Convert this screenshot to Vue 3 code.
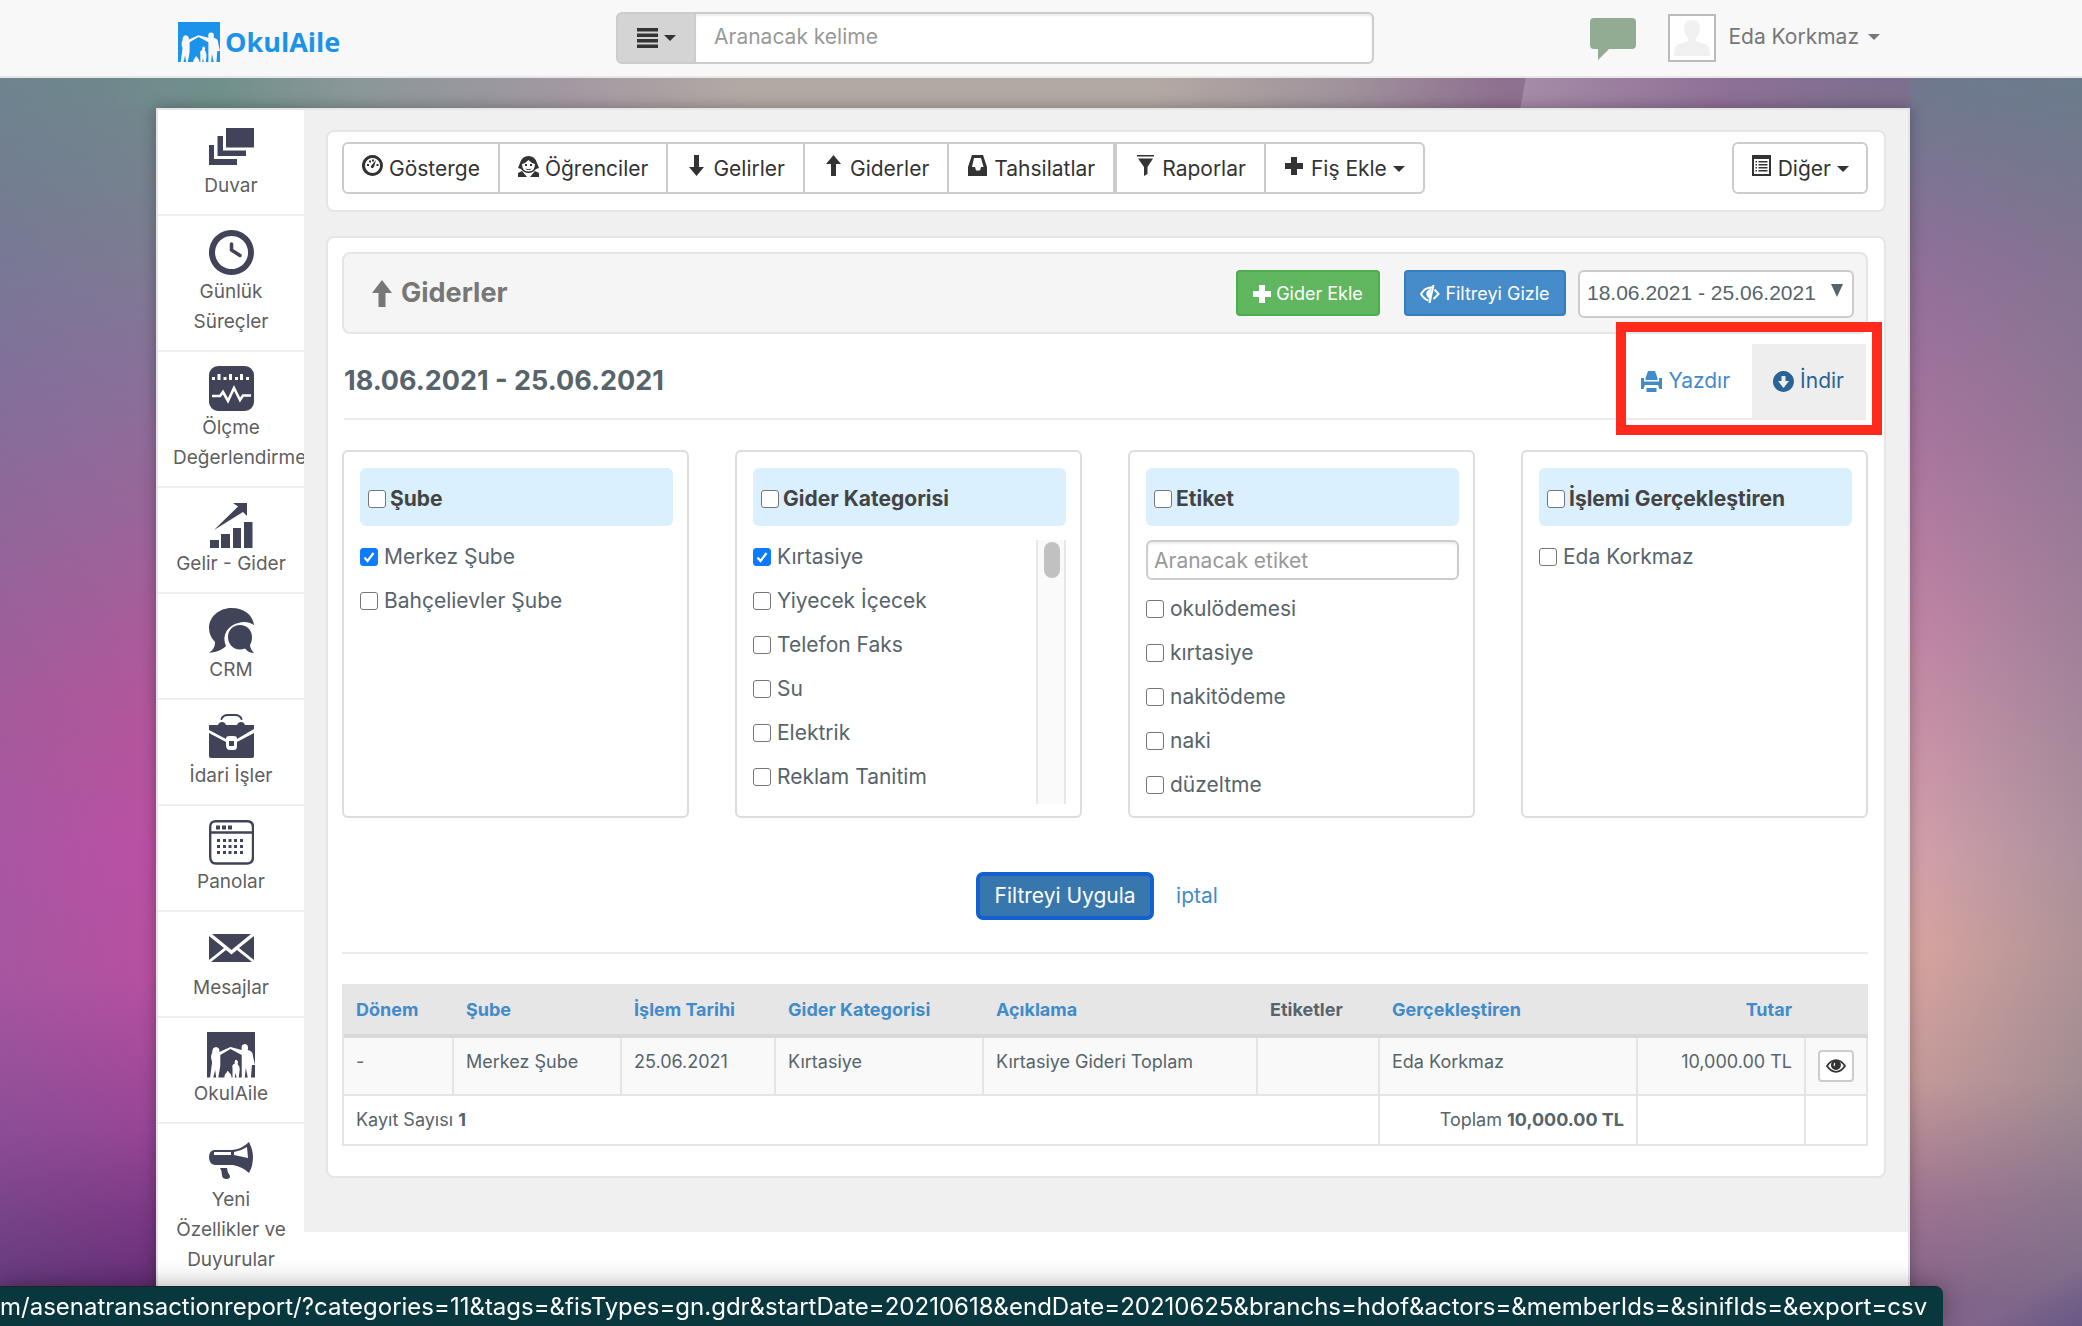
<script setup>
import { ref } from 'vue'

const familyCut =
  'M2 46 L4 30 Q2 24 4 21 Q4 15 8 15 Q12 16 11 20 L22 15 L33 18 Q32 12 36 12 Q40 12 39 18 Q44 19 44 24 L46 33 L43 33 L42 46 L39 46 L37 36 L36 46 L33 46 L33 23 L22 17 L12 23 L12 34 L10 46 L8 46 L7 38 L5 46 Z M24 46 L24 37 Q23 32 26 32 Q26 27 28 28 Q30 29 29 32 Q31 34 31 38 L30 46 L28 46 L27 41 L26 46 Z M16 46 Q16 42 18 41 Q19 37 21 41 Q23 42 23 46 Z'

const nav = [
  {
    label: 'Duvar',
    fill: 'M17 4H45V23.500H17Z M8.500 12H14V26.500H37V32H8.500Z M0 21H5V35H28V41H0Z',
  },
  {
    label: 'Günlük Süreçler',
    fill: 'M22.500 0A22.500 22.500 0 1 1 22.400 0Z M22.500 6A16.500 16.500 0 1 0 22.600 6Z',
    line: 'M22.500 14V20L31 25.500',
    lineWidth: 3.5,
  },
  {
    label: 'Ölçme Değerlendirme',
    fill: 'M9 0H36A9 9 0 0 1 45 9V36A9 9 0 0 1 36 45H9A9 9 0 0 1 0 36V9A9 9 0 0 1 9 0Z M3 11H6V14H3Z M8.500 8H11.500V14H8.500Z M14.500 11H17.500V14H14.500Z M20 8H23V14H20Z M26 11H29V14H26Z M31 8H34V14H31Z M37 11H40V14H37Z',
    cut: 'M3 30H11L14 26L19 35L25 22L31 34L34 29.500H42',
    cutWidth: 2.6,
  },
  {
    label: 'Gelir - Gider',
    fill: 'M1 38H10V46H1Z M12 32H21V46H12Z M24 26H32V46H24Z M35 20H43.500V46H35Z M5 28L29 4.500L24 1H38V14L34 10Z',
  },
  {
    label: 'CRM',
    fill: 'M22.500 0C35 0 44 7 45 17C38 12 30 14 24 17C17 21 13 29 17 38C12 43 6 44 0 45C4 42 6 39 6 34C2 30 0 25 0 20C0 9 10 0 22.500 0Z M31 17C38 17 43 22 43 29C43 33 42 35 41 37C41 40 43 43 45 45C41 45 38 43 36 40.500C26 44 19 37 19 29C19 22 24 17 31 17Z',
  },
  {
    label: 'İdari İşler',
    fill: 'M0 11H9Q10 8 13 8Q16 8 17 11H28Q29 8 32 8Q35 8 36 11H45V15L28 25Q28 22 25 22H20Q17 22 17 25L0 16Z M0 19L17 28V31Q17 36 21 36H25Q28 36 28 32V28L45 19V42Q45 44 43 44H2Q0 44 0 42Z M20 27H25V32H20Z',
    line: 'M12.500 5Q14 1 19 1H26Q31 1 32.500 5',
    lineWidth: 2,
  },
  {
    label: 'Panolar',
    fill: 'M7 5.500H11V9.500H7Z M13 5.500H17V9.500H13Z M19 5.500H23V9.500H19Z M8 19H11V22H8Z M14 19H17V22H14Z M19.500 19H22.500V22H19.500Z M25 19H28V22H25Z M31 19H34V22H31Z M8 25H11V28H8Z M14 25H17V28H14Z M19.500 25H22.500V28H19.500Z M25 25H28V28H25Z M31 25H34V28H31Z M8 31H11V34H8Z M14 31H17V34H14Z M19.500 31H22.500V34H19.500Z M25 31H28V34H25Z M31 31H34V34H31Z',
    line: 'M7 1.200H38Q44 1.200 44 7V37Q44 43.500 38 43.500H7Q1.200 43.500 1.200 37V7Q1.200 1.200 7 1.200Z M1 12.500H44',
    lineWidth: 2.4,
  },
  {
    label: 'Mesajlar',
    fill: 'M3 8H42L22.500 24Z M0 10L15 22L0 34Z M45 10V34L30 22Z M2 36L17 24L22.500 28.500L28 24L43 36Z',
  },
  {
    label: 'OkulAile',
    wide: true,
    fill: 'M-1 0H46V45.500H-1Z',
    shape: familyCut,
  },
  {
    label: 'Yeni Özellikler ve Duyurular',
    fill: 'M5 12H23Q33 11 40 4Q44 12 44 19Q44 28 40 35Q34 29 24 27H6Q0 26 0 19Q0 13 5 12Z M5 14V17H22V14Z M25 14V17L39 20L38 9Q32 13 25 14Z M11 30H18Q18 34 21 38Q21 41 18 41Q13 41 13 37Q13 33 11 30Z',
  },
]

const arrowUp = 'M10.500 0L18 9H13V21H8V9H3Z'
const plus = 'M7 2H13V8H19V14H13V20H7V14H1V8H7Z'

const groups = [
  [
    {
      label: 'Gösterge',
      fill: 'M10.500 0A10.500 10.500 0 1 1 10.400 0Z M10.500 3A7.500 7.500 0 1 0 10.600 3Z M5 9H7V11H5Z M7 5.500H9V7.500H7Z M10 4.500H12V6.500H10Z M14.500 9H16.500V11H14.500Z M9 11L14 5L12 12Q10.500 14 9 12.500Z',
    },
    {
      label: 'Öğrenciler',
      fill: 'M10.500 1Q17 1 19 8L21 13L18 14Q15 18 10.500 18Q6 18 3 14L0 13L2 8Q4 1 10.500 1Z M10.500 5Q8 8 4 9Q4 16.500 10.500 16.500Q17 16.500 17 9Q13 8 10.500 5Z M7 9H9V11H7Z M12 9H14V11H12Z M7 13Q10.500 15.500 14 13L12 15H9Z M0 22V18L4 16L9 22Z M21 22V18L17 16L12 22Z',
    },
    { label: 'Gelirler', fill: 'M8 0H13V12H18L10.500 21L3 12H8Z' },
    { label: 'Giderler', fill: arrowUp },
    {
      label: 'Tahsilatlar',
      fill: 'M5 0H16L20 12V21H1V12Z M7 3L5 12H8L9 15.500H13L14 12H16.500L14 3Z',
    },
  ],
  [
    { label: 'Raporlar', fill: 'M2 0H19V1.500H2Z M3 3.500H18L12.500 12V19L9 21V12Z' },
    { label: 'Fiş Ekle', fill: plus, caret: true },
  ],
]

const branches = ref([
  { label: 'Merkez Şube', on: true },
  { label: 'Bahçelievler Şube', on: false },
])
const categories = ref([
  { label: 'Kırtasiye', on: true },
  { label: 'Yiyecek İçecek', on: false },
  { label: 'Telefon Faks', on: false },
  { label: 'Su', on: false },
  { label: 'Elektrik', on: false },
  { label: 'Reklam Tanitim', on: false },
])
const tags = ref(
  ['okulödemesi', 'kırtasiye', 'nakitödeme', 'naki', 'düzeltme'].map((label) => ({ label, on: false })),
)
const actors = ref([{ label: 'Eda Korkmaz', on: false }])

const filters = [
  { title: 'Şube', items: branches },
  { title: 'Gider Kategorisi', items: categories, scroll: true },
  { title: 'Etiket', items: tags, search: true },
  { title: 'İşlemi Gerçekleştiren', items: actors },
]
</script>

<template>
  <div class="page">
    <header class="topbar">
      <a class="logo" href="#">
        <svg width="42" height="40" viewBox="-1 0 47 45.500" preserveAspectRatio="none" aria-hidden="true">
          <path d="M-1 0H46V45.500H-1Z" fill="#1b93ea" />
          <path :d="familyCut" fill="#f8f8f8" />
        </svg>
        <span>OkulAile</span>
      </a>
      <form class="search" @submit.prevent>
        <button type="button" class="search-menu" aria-label="Menü">
          <svg width="21" height="20" viewBox="0 0 21 20" aria-hidden="true">
            <path d="M0 0H21V3.500H0Z M0 5.500H21V9H0Z M0 11H21V14.500H0Z M0 16.500H21V20H0Z" fill="#333" />
          </svg>
          <i class="caret"></i>
        </button>
        <input type="text" placeholder="Aranacak kelime" aria-label="Aranacak kelime" />
      </form>
      <div class="user">
        <svg class="chat" width="46" height="42" viewBox="0 0 46 42" aria-hidden="true">
          <path d="M4 0H42Q46 0 46 4V27Q46 31 42 31H19L8 42V31H4Q0 31 0 27V4Q0 0 4 0Z" fill="#92ab93" />
        </svg>
        <span class="avatar">
          <svg width="36" height="36" viewBox="0 0 36 36" aria-hidden="true">
            <path d="M18 0Q26 0 26 9Q26 14 22 18V21L33 25Q36 27 36 36H0Q0 27 3 25L14 21V18Q10 14 10 9Q10 0 18 0Z" fill="#f1f1f1" />
          </svg>
        </span>
        <button type="button" class="user-name">Eda Korkmaz<i class="caret"></i></button>
      </div>
    </header>

    <div class="shell">
      <nav class="side">
        <a v-for="n in nav" :key="n.label" href="#" class="side-item">
          <svg :width="n.wide ? 48 : 45" height="46" :viewBox="n.wide ? '-1 0 47 46' : '0 0 45 46'" preserveAspectRatio="none" aria-hidden="true">
            <path :d="n.fill" fill="#414459" fill-rule="evenodd" />
            <path v-if="n.shape" :d="n.shape" fill="#fff" />
            <path v-if="n.cut" :d="n.cut" fill="none" stroke="#fff" :stroke-width="n.cutWidth" />
            <path v-if="n.line" :d="n.line" fill="none" stroke="#414459" :stroke-width="n.lineWidth" stroke-linecap="round" />
          </svg>
          <span>{{ n.label }}</span>
        </a>
      </nav>

      <main class="content">
        <section class="card tools">
          <div class="groups">
            <div v-for="(g, i) in groups" :key="i" class="group">
              <button v-for="b in g" :key="b.label" type="button" class="btn">
                <svg class="lift" width="21" height="22" viewBox="0 0 21 22" aria-hidden="true"><path :d="b.fill" fill="#333" fill-rule="evenodd" /></svg>
                {{ b.label }}
                <i v-if="b.caret" class="caret"></i>
              </button>
            </div>
          </div>
          <button type="button" class="btn single">
            <svg class="lift" width="21" height="22" viewBox="0 0 21 22" aria-hidden="true">
              <path d="M1 0H20V21H1Z M3 4V19H18V4Z M4.500 6H6V7.500H4.500Z M7.500 6H16.500V7.500H7.500Z M4.500 9H6V10.500H4.500Z M7.500 9H16.500V10.500H7.500Z M4.500 12H6V13.500H4.500Z M7.500 12H16.500V13.500H7.500Z M4.500 15H6V16.500H4.500Z M7.500 15H16.500V16.500H7.500Z" fill="#333" fill-rule="evenodd" />
            </svg>
            Diğer
            <i class="caret"></i>
          </button>
        </section>

        <section class="card report">
          <div class="panel-head">
            <h1>
              <svg width="20" height="27" viewBox="0 0 20 27" aria-hidden="true"><path d="M10 0L20 13H13.500V27H6.500V13H0Z" fill="#777" /></svg>
              Giderler
            </h1>
            <button type="button" class="small add">
              <svg width="18" height="18" viewBox="1 2 18 18" aria-hidden="true"><path :d="plus" fill="#fff" /></svg>
              Gider Ekle
            </button>
            <button type="button" class="small hide">
              <svg width="20" height="18" viewBox="0 0 20 18" aria-hidden="true">
                <path d="M12 2.500Q5 2 1 9Q4 14 8.500 15.500M14.500 4.500L18.500 9L13.500 14" fill="none" stroke="#fff" stroke-width="2" />
                <path d="M13.500 0L9.500 18M10 5Q5 8 9 12Z" fill="#fff" stroke="#fff" stroke-width="2" />
              </svg>
              Filtreyi Gizle
            </button>
            <div class="range">
              <select aria-label="Tarih aralığı">
                <option>18.06.2021 - 25.06.2021</option>
              </select>
              <svg width="12" height="13" viewBox="0 0 12 13" aria-hidden="true"><path d="M0 0H12L6 13Z" fill="#57646b" /></svg>
            </div>
          </div>

          <div class="title-row">
            <h2>18.06.2021 - 25.06.2021</h2>
            <div class="exports">
              <a href="#" class="export">
                <svg width="21" height="21" viewBox="0 0 21 21" aria-hidden="true">
                  <path d="M7 0H14L16.500 7V9H4.500V7Z M0 7H3V10.500H18V7H21V18H18.500L17 14H4L2.500 18H0Z M5.500 17H15.500V21H5.500Z" fill="#428bca" />
                </svg>
                Yazdır
              </a>
              <a href="#" class="export current">
                <svg width="21" height="21" viewBox="0 0 21 21" aria-hidden="true">
                  <path d="M10.500 0A10.500 10.500 0 1 1 10.400 0Z M8.500 5V10H5L10.500 17L16 10H12.500V5Z" fill="#2a6496" fill-rule="evenodd" />
                </svg>
                İndir
              </a>
              <div class="highlight"></div>
            </div>
          </div>

          <div class="filters">
            <fieldset v-for="f in filters" :key="f.title" class="filter">
              <label class="filter-head"><input type="checkbox" />{{ f.title }}</label>
              <input v-if="f.search" class="tag-search" type="text" placeholder="Aranacak etiket" aria-label="Aranacak etiket" />
              <div class="filter-body">
                <div class="options">
                  <label v-for="o in f.items.value" :key="o.label" class="option">
                    <input v-model="o.on" type="checkbox" />{{ o.label }}
                  </label>
                </div>
                <div v-if="f.scroll" class="track"><div class="thumb"></div></div>
              </div>
            </fieldset>
          </div>

          <div class="actions">
            <button type="button" class="apply">Filtreyi Uygula</button>
            <a href="#">iptal</a>
          </div>

          <table>
            <colgroup>
              <col class="c-term" /><col class="c-branch" /><col class="c-date" /><col class="c-cat" /><col class="c-desc" />
              <col class="c-tags" /><col class="c-actor" /><col class="c-sum" /><col class="c-view" />
            </colgroup>
            <thead>
              <tr>
                <th><a href="#">Dönem</a></th>
                <th><a href="#">Şube</a></th>
                <th><a href="#">İşlem Tarihi</a></th>
                <th><a href="#">Gider Kategorisi</a></th>
                <th><a href="#">Açıklama</a></th>
                <th>Etiketler</th>
                <th><a href="#">Gerçekleştiren</a></th>
                <th class="num"><a href="#">Tutar</a></th>
                <th></th>
              </tr>
            </thead>
            <tbody>
              <tr class="entry">
                <td>-</td>
                <td>Merkez Şube</td>
                <td>25.06.2021</td>
                <td>Kırtasiye</td>
                <td>Kırtasiye Gideri Toplam</td>
                <td></td>
                <td>Eda Korkmaz</td>
                <td class="num">10,000.00 TL</td>
                <td class="view-cell">
                  <button type="button" class="view" aria-label="Görüntüle">
                    <svg width="20" height="14" viewBox="0 0 20 14" aria-hidden="true">
                      <path d="M1 7Q5 1.200 10 1.200Q15 1.200 19 7Q15 12.800 10 12.800Q5 12.800 1 7Z" fill="none" stroke="#333" stroke-width="1.800" />
                      <path d="M10 1A5 5 0 1 1 9.900 1Z M9 3.500Q7 4.500 8 7.500Q9.500 6.500 9 3.500Z" fill="#333" fill-rule="evenodd" />
                    </svg>
                  </button>
                </td>
              </tr>
              <tr class="total">
                <td colspan="6">Kayıt Sayısı <b>1</b></td>
                <td class="num">Toplam <b>10,000.00 TL</b></td>
                <td></td>
                <td></td>
              </tr>
            </tbody>
          </table>
        </section>
      </main>
    </div>

    <div class="status">m/asenatransactionreport/?categories=11&amp;tags=&amp;fisTypes=gn.gdr&amp;startDate=20210618&amp;endDate=20210625&amp;branchs=hdof&amp;actors=&amp;memberIds=&amp;sinifIds=&amp;export=csv</div>
  </div>
</template>

<style>
body {
  margin: 0;
}
</style>

<style scoped>
* {
  box-sizing: border-box;
}
.page {
  min-height: 100vh;
  display: flex;
  flex-direction: column;
  font-family: Inter, Roboto, sans-serif;
  font-size: 21px;
  line-height: 30px;
  color: #57646b;
  background:
    linear-gradient(100deg, transparent 1502px, #a68ba8 1503px, #8f7096 1700px, #7d708e 1850px, transparent 1900px) 0 78px / 100% 30px no-repeat,
    linear-gradient(90deg, transparent 100px, #70908c 220px, #8a9798 350px, #a298a2 560px, #b3a9a4 750px, #b3a9a4 1150px, #a1939c 1340px, #8f7090 1500px, transparent 1900px) 0 78px / 100% 30px no-repeat,
    linear-gradient(180deg, rgba(90, 135, 140, 0.4) 78px, rgba(90, 135, 140, 0) 260px) 100% 0 / 172px 100% no-repeat,
    linear-gradient(150deg, rgba(90, 75, 130, 0) 1180px, rgba(90, 75, 130, 0.6)) 100% 0 / 172px 100% no-repeat,
    linear-gradient(90deg, rgba(110, 120, 135, 0), rgba(110, 120, 135, 0.4)) 100% 0 / 172px 100% no-repeat,
    linear-gradient(90deg, rgba(100, 110, 155, 0.2), rgba(100, 110, 155, 0)) 0 0 / 156px 100% no-repeat,
    linear-gradient(180deg, #70898b 78px, #78808f 200px, #89709a 380px, #9c6499 530px, #b3569b 700px, #bb50a3 850px, #b650a0 980px, #964595 1130px, #642d75 1290px) 0 0 / 50% 100% no-repeat,
    linear-gradient(180deg, #7d7090 100px, #8f7098 250px, #a8749e 430px, #c084a4 620px, #d3a0ab 850px, #d8a4a0 950px, #c59a9a 1080px, #9f7590 1200px, #85628a 1300px) 100% 0 / 50% 100% no-repeat;
}
a {
  color: #428bca;
  text-decoration: none;
}
button,
input,
select {
  font: inherit;
  color: inherit;
  margin: 0;
}
svg {
  flex: none;
  display: block;
}
.caret {
  border: 6px solid transparent;
  border-top-color: currentColor;
  border-bottom: 0;
  flex: none;
}

.topbar {
  height: 78px;
  flex: none;
  display: flex;
  align-items: flex-start;
  background: #f8f8f8;
  border-bottom: 2px solid #e7e7e7;
  padding: 0 202px 0 178px;
}
.logo {
  display: flex;
  align-items: center;
  gap: 5px;
  width: 438px;
  flex: none;
  margin-top: 22px;
  color: #1b93ea;
  font: 700 27px/40px "Open Sans", "Noto Sans", sans-serif;
}
.search {
  display: flex;
  width: 758px;
  height: 52px;
  margin-top: 12px;
}
.search-menu {
  display: flex;
  align-items: center;
  justify-content: center;
  gap: 6px;
  width: 80px;
  background: #d4d4d4;
  border: 2px solid #ccc;
  border-radius: 6px 0 0 6px;
  color: #333;
}
.search input {
  flex: 1;
  min-width: 0;
  border: 2px solid #ccc;
  border-left: 0;
  border-radius: 0 6px 6px 0;
  background: #fff;
  padding: 0 18px 2px;
  box-shadow: inset 0 2px 2px rgba(0, 0, 0, 0.07);
}
input::placeholder {
  color: #999;
  opacity: 1;
}
.user {
  display: flex;
  align-items: center;
  margin: 14px 0 0 auto;
}
.chat {
  margin: 2px 32px 0 0;
}
.avatar {
  width: 48px;
  height: 48px;
  border: 2px solid #bbb;
  background: #fff;
  display: flex;
  align-items: center;
  justify-content: center;
}
.user-name {
  display: flex;
  align-items: center;
  gap: 9px;
  border: 0;
  background: none;
  padding: 0;
  margin: 0 0 2px 12px;
  color: #777;
}

.shell {
  flex: 1;
  display: flex;
  align-items: flex-start;
  margin: 30px 172px 0 156px;
  border: 2px solid #e5e5e5;
  border-bottom: 0;
  background: #fff;
  box-shadow: 0 0 14px rgba(0, 0, 0, 0.3);
}
.side {
  width: 146px;
  flex: none;
}
.side-item {
  display: flex;
  flex-direction: column;
  align-items: center;
  overflow: hidden;
  gap: 1px;
  padding: 14px 15px 13px;
  border-bottom: 2px solid #eee;
  color: #5f5f5f;
  font-size: 19px;
}
.side-item span {
  width: 116px;
  text-align: center;
}
.side-item:last-child {
  border-bottom: 0;
}
.content {
  flex: 1;
  min-width: 0;
  background: #f0f0f0;
  padding: 20px 22px 54px;
}
.card {
  background: #fff;
  border: 2px solid #e5e5e5;
  border-radius: 8px;
}
.tools {
  display: flex;
  justify-content: space-between;
  padding: 10px 16px 16px 14px;
  margin-bottom: 24px;
}
.groups,
.group {
  display: flex;
}
.btn {
  display: flex;
  align-items: center;
  justify-content: center;
  gap: 6px;
  height: 52px;
  padding: 2px 18px 0;
  border: 2px solid #ccc;
  background: #fff;
  color: #333;
  white-space: nowrap;
}
.btn + .btn {
  margin-left: -2px;
}
.group:first-child .btn:first-child {
  border-radius: 6px 0 0 6px;
}
.group:last-child .btn:last-child {
  border-radius: 0 6px 6px 0;
}
.single {
  border-radius: 6px;
  padding: 2px 17px 0;
}
.lift {
  margin-bottom: 6px;
}

.report {
  padding: 14px 16px 30px 14px;
}
.panel-head {
  display: flex;
  align-items: flex-start;
  height: 82px;
  padding: 16px 12px 0 28px;
  border: 2px solid #e5e5e5;
  border-radius: 8px;
  background: #f5f5f5;
}
h1,
h2 {
  margin: 0;
  font-size: 27px;
  line-height: 46px;
  font-weight: 700;
}
h1 {
  display: flex;
  align-items: center;
  gap: 9px;
  margin-right: auto;
  color: #777;
}
.small {
  display: flex;
  align-items: center;
  justify-content: center;
  gap: 5px;
  height: 46px;
  padding: 2px 0 0;
  border-radius: 4px;
  color: #fff;
  font-size: 18px;
  white-space: nowrap;
}
.add {
  width: 144px;
  background: #60b760;
  border: 2px solid #4cae4c;
  margin-right: 24px;
}
.hide {
  width: 162px;
  background: #468cca;
  border: 2px solid #357ebd;
  margin-right: 12px;
}
.range {
  position: relative;
  width: 276px;
}
.range select {
  appearance: none;
  width: 100%;
  height: 48px;
  padding: 0 7px 2px;
  border: 2px solid #ccc;
  border-radius: 6px;
  background: #fff;
  font-family: "Liberation Sans", Arial, sans-serif;
}
.range svg {
  position: absolute;
  right: 11px;
  top: 14px;
  pointer-events: none;
}

.title-row {
  display: flex;
  justify-content: space-between;
  margin: 10px 2px 30px;
  border-bottom: 2px solid #ebebeb;
}
h2 {
  line-height: 74px;
}
.exports {
  position: relative;
  display: flex;
}
.export {
  display: flex;
  align-items: center;
  gap: 6px;
  padding: 0 22px 0 21px;
  height: 74px;
}
.current {
  background: #eee;
  color: #2a6496;
}
.highlight {
  position: absolute;
  inset: -22px -16px -17px -4px;
  border: 10px solid #ff2a1c;
  pointer-events: none;
}

.filters {
  display: grid;
  grid-template-columns: repeat(4, 1fr);
  gap: 46px;
}
.filter {
  min-width: 0;
  margin: 0;
  padding: 16px 14px 12px 16px;
  border: 2px solid #ddd;
  border-radius: 6px;
}
.filter-head {
  display: flex;
  align-items: center;
  gap: 4px;
  height: 58px;
  padding: 3px 8px 0;
  margin-bottom: 14px;
  border-radius: 6px;
  background: #daf0ff;
  color: #444;
  font-weight: 700;
}
input[type='checkbox'] {
  appearance: none;
  flex: none;
  width: 18px;
  height: 18px;
  border: 1px solid #767676;
  border-radius: 3px;
  background: #fff;
}
input[type='checkbox']:checked {
  border-color: #0d7bff;
  background: #0d7bff url("data:image/svg+xml,%3Csvg xmlns='http://www.w3.org/2000/svg' viewBox='0 0 16 16'%3E%3Cpath d='M3.500 8.500L6.500 12L12.500 4' fill='none' stroke='white' stroke-width='2.200'/%3E%3C/svg%3E") center / 16px 16px no-repeat;
}
.filter-body {
  display: flex;
  justify-content: space-between;
}
.option {
  display: flex;
  align-items: center;
  gap: 6px;
  height: 44px;
  padding-bottom: 10px;
  white-space: nowrap;
}
.option:last-child {
  height: 34px;
  padding-bottom: 0;
}
.tag-search {
  display: block;
  width: 100%;
  height: 40px;
  margin-bottom: 12px;
  padding: 0 6px;
  border: 2px solid #ccc;
  border-radius: 6px;
  background: #fff;
  box-shadow: inset 0 2px 2px rgba(0, 0, 0, 0.07);
}
.track {
  width: 30px;
  height: 264px;
  padding: 2px 4px 0 6px;
  border: solid #e8e8e8;
  border-width: 0 2px;
  background: #fafafa;
}
.thumb {
  height: 36px;
  border-radius: 8px;
  background: #c1c1c1;
}

.actions {
  display: flex;
  align-items: center;
  justify-content: center;
  gap: 22px;
  height: 136px;
  padding: 28px 16px 6px 0;
  margin-bottom: 30px;
  border-bottom: 2px solid #ebebeb;
}
.apply {
  width: 178px;
  height: 48px;
  padding: 0;
  border: 4px solid #0f62d0;
  border-radius: 7px;
  background: #3876ae;
  color: #fff;
  white-space: nowrap;
}

table {
  width: 100%;
  table-layout: fixed;
  border-collapse: separate;
  border-spacing: 0;
  border-left: 2px solid #e5e5e5;
  font-size: 18px;
}
.c-term { width: 110px; }
.c-branch { width: 168px; }
.c-date { width: 154px; }
.c-cat { width: 208px; }
.c-desc { width: 274px; }
.c-tags { width: 122px; }
.c-actor { width: 258px; }
.c-sum { width: 168px; }
.c-view { width: 62px; }
th {
  height: 54px;
  padding: 2px 12px 0;
  text-align: left;
  background: #e6e6e6;
  border-bottom: 4px solid #d9d9d9;
}
td {
  height: 50px;
  padding: 9px 12px;
  vertical-align: top;
  border: solid #e5e5e5;
  border-width: 0 2px 2px 0;
}
.entry td {
  height: 58px;
  background: #f9f9f9;
}
.num {
  text-align: right;
}
th.num {
  padding-right: 14px;
}
.entry .view-cell {
  padding: 12px 0 0;
}
.view {
  display: flex;
  align-items: center;
  justify-content: center;
  width: 36px;
  height: 32px;
  margin: 0 auto;
  padding: 0;
  border: 2px solid #ccc;
  border-radius: 4px;
  background: #fff;
}

.status {
  position: fixed;
  left: 0;
  bottom: 0;
  height: 40px;
  padding: 0 16px 0 0;
  border-top: 1px solid #222;
  border-radius: 0 8px 0 0;
  background: #08383d;
  box-shadow: 0 0 24px rgba(0, 0, 0, 0.35);
  color: #fff;
  font-size: 24px;
  line-height: 40px;
  white-space: nowrap;
}
</style>
